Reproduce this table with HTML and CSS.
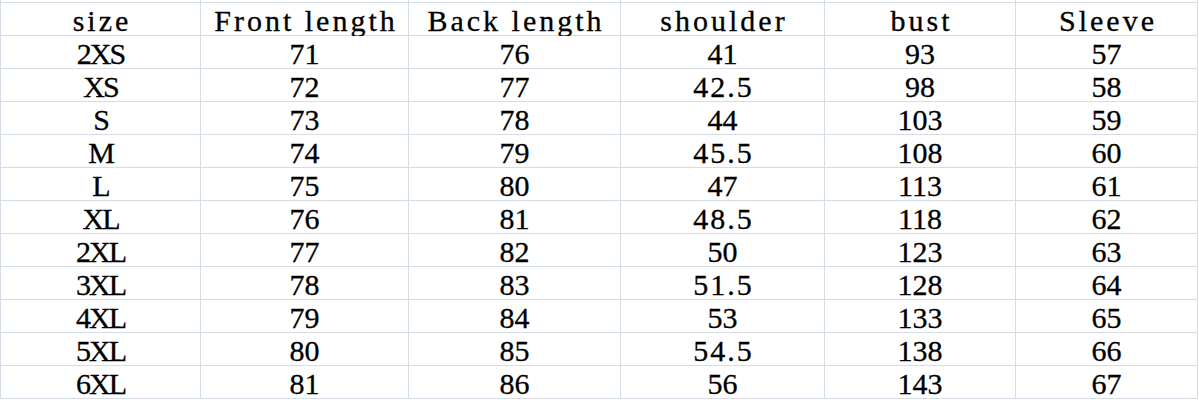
FILE: index.html
```html
<!DOCTYPE html>
<html lang="en">
<head>
<meta charset="utf-8">
<title>Size chart</title>
<link rel="stylesheet" href="styles.css">
</head>
<body>
<div class="sheet">
  <div class="cell pad"></div><div class="cell pad"></div><div class="cell pad"></div><div class="cell pad"></div><div class="cell pad"></div><div class="cell pad"></div>

  <div class="cell head">size</div><div class="cell head">Front length</div><div class="cell head">Back length</div><div class="cell head">shoulder</div><div class="cell head">bust</div><div class="cell head">Sleeve</div>

  <div class="cell label">2XS</div><div class="cell">71</div><div class="cell">76</div><div class="cell">41</div><div class="cell">93</div><div class="cell">57</div>
  <div class="cell label">XS</div><div class="cell">72</div><div class="cell">77</div><div class="cell dec">42.5</div><div class="cell">98</div><div class="cell">58</div>
  <div class="cell label">S</div><div class="cell">73</div><div class="cell">78</div><div class="cell">44</div><div class="cell">103</div><div class="cell">59</div>
  <div class="cell label">M</div><div class="cell">74</div><div class="cell">79</div><div class="cell dec">45.5</div><div class="cell">108</div><div class="cell">60</div>
  <div class="cell label">L</div><div class="cell">75</div><div class="cell">80</div><div class="cell">47</div><div class="cell">113</div><div class="cell">61</div>
  <div class="cell label">XL</div><div class="cell">76</div><div class="cell">81</div><div class="cell dec">48.5</div><div class="cell">118</div><div class="cell">62</div>
  <div class="cell label">2XL</div><div class="cell">77</div><div class="cell">82</div><div class="cell">50</div><div class="cell">123</div><div class="cell">63</div>
  <div class="cell label">3XL</div><div class="cell">78</div><div class="cell">83</div><div class="cell dec">51.5</div><div class="cell">128</div><div class="cell">64</div>
  <div class="cell label">4XL</div><div class="cell">79</div><div class="cell">84</div><div class="cell">53</div><div class="cell">133</div><div class="cell">65</div>
  <div class="cell label">5XL</div><div class="cell">80</div><div class="cell">85</div><div class="cell dec">54.5</div><div class="cell">138</div><div class="cell">66</div>
  <div class="cell label">6XL</div><div class="cell">81</div><div class="cell">86</div><div class="cell">56</div><div class="cell">143</div><div class="cell">67</div>
</div>
</body>
</html>
```

FILE: styles.css
```css
html, body {
  margin: 0;
  padding: 0;
  background: #ffffff;
  overflow: hidden;
}

.sheet {
  display: grid;
  grid-template-columns: 199px 207px 211px 203px 190px 181px;
  grid-template-rows: 2px repeat(12, 32px);
  gap: 1px;
  width: 1198px;
  box-sizing: border-box;
  padding-left: 1px;
  border-right: 1px solid #d6dce6;
  border-bottom: 1px solid #d6dce6;
  background: #d6dce6;
  font-family: "Liberation Serif", "Times New Roman", serif;
  font-size: 30px;
  color: #000000;
  -webkit-text-stroke: 0.3px #000000;
}

.cell {
  background: #ffffff;
  text-align: center;
  line-height: 32px;
  padding-top: 2px;
  box-sizing: border-box;
  white-space: nowrap;
  overflow: visible;
}

.pad {
  padding: 0;
  line-height: 0;
}

.head {
  letter-spacing: 3px;
  text-indent: 3px;
}

.label {
  letter-spacing: -2px;
}

.dec {
  letter-spacing: 2px;
  text-indent: 2px;
}
```
